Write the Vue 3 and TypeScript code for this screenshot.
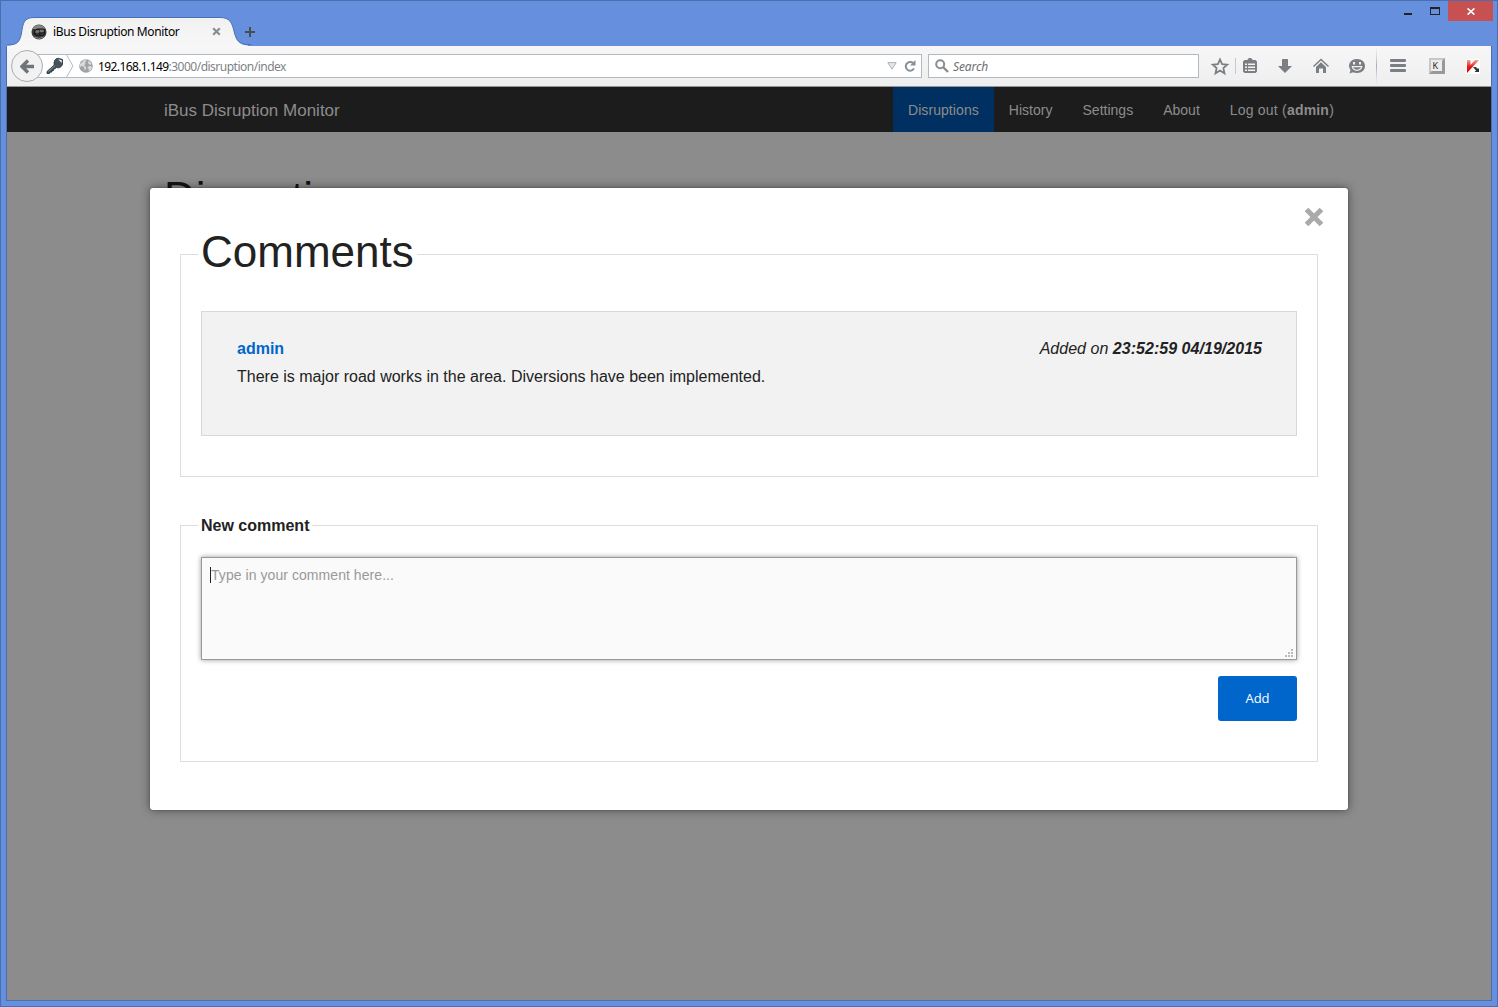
<script setup lang="ts">
interface NavItem {
  label: string
  active?: boolean
  user?: string
}

interface Comment {
  author: string
  added: string
  text: string
}

const appName = 'iBus Disruption Monitor'

const navItems: NavItem[] = [
  { label: 'Disruptions', active: true },
  { label: 'History' },
  { label: 'Settings' },
  { label: 'About' },
  { label: 'Log out', user: 'admin' },
]

const comments: Comment[] = [
  {
    author: 'admin',
    added: '23:52:59 04/19/2015',
    text: 'There is major road works in the area. Diversions have been implemented.',
  },
]
</script>

<template>
  <div class="window">
    <header class="titlebar">
      <div class="tab">
        <svg class="tab-shape" width="244" height="29" viewBox="0 0 244 29">
          <defs>
            <linearGradient id="tabFill" x1="0" y1="0" x2="0" y2="1">
              <stop offset="0" stop-color="#f1f1f2" />
              <stop offset="1" stop-color="#f7f7f8" />
            </linearGradient>
          </defs>
          <path d="M0 28.5C10 28.5 13 25 14.500 16C16 6 17 .5 27 .5H213C223 .5 225 6 227 14C229 23 232 28 241 28.500V29H0Z" fill="url(#tabFill)" />
          <path d="M0 28C10 28 13 25 14.500 16C16 6 17 .5 27 .5H213C223 .5 225 6 227 14C229 23 232 27.500 241 27.500H244" fill="none" stroke="#4a70b4" />
        </svg>
        <svg class="favicon" width="16" height="16" viewBox="0 0 16 16">
          <circle cx="8" cy="8" r="7.500" fill="#3b3b3b" />
          <path d="M1.500 5A7.200 7.200 0 0 1 14.500 5Z" fill="#858585" />
          <path d="M3 6.500 6 4.500h7l1 1v4.500l-2 2H5L2.500 10Z" fill="#1b1b1b" />
          <path d="M5 6.500h3v2H4.500ZM9 6h3.500v2H9ZM5 10h3M9.500 10h3" fill="#777" stroke="#777" stroke-width=".6" />
          <path d="M3 13q5 3 10 0" fill="none" stroke="#888" />
        </svg>
        <span class="tab-title">{{ appName }}</span>
        <svg class="tab-close" width="9" height="9" viewBox="0 0 9 9">
          <path d="M1.200 1.200 7.800 7.800M7.800 1.200 1.200 7.800" stroke="#8a8d91" stroke-width="2.200" />
        </svg>
      </div>
      <svg class="new-tab" width="10" height="10" viewBox="0 0 10 10">
        <path d="M5 0V10M0 5H10" stroke="#4a4c50" stroke-width="2" />
      </svg>
      <div class="controls">
        <svg width="8" height="2"><rect width="8" height="2" fill="#222" /></svg>
        <svg class="maximize" width="10" height="8" viewBox="0 0 10 8">
          <path d="M0 0H10V8H0ZM1 2V7H9V2Z" fill="#222" fill-rule="evenodd" />
        </svg>
        <div class="close">
          <svg width="8" height="7" viewBox="0 0 8 7">
            <path d="M.6.4 7.400 6.600M7.400.4.6 6.600" stroke="#fff" stroke-width="1.600" />
          </svg>
        </div>
      </div>
    </header>

    <div class="toolbar">
      <div class="back">
        <svg width="15" height="15" viewBox="0 0 15 15">
          <path d="M8 1.500 2 7.500 8 13.500M2.500 7.500H14" fill="none" stroke="#6f7479" stroke-width="3.400" />
        </svg>
      </div>
      <div class="urlbar">
        <svg class="key" width="18" height="18" viewBox="0 0 18 18">
          <path d="M1 14.500 8.200 8C7.500 4.500 9 1.500 12 1.200L16.500 2.500V7C16 10 13 11.500 10.500 10.500L8.500 12H7.500V13.500H6V15H4.500L3.500 16.500H1Z" fill="#45535d" stroke="#222d35" stroke-width=".8" />
          <path d="M2.500 14.500 9 8.700" stroke="#84929b" />
          <path d="M12.200 2.300 15.700 6V3.200Z" fill="#fff" />
        </svg>
        <svg class="chevron" width="9" height="24" viewBox="0 0 9 24">
          <path d="M1 0 8 12 1 24" fill="none" stroke="#b5bcc2" />
        </svg>
        <svg class="globe" width="14" height="14" viewBox="0 0 14 14">
          <circle cx="7" cy="7" r="6.800" fill="#a0a2a4" />
          <path d="M5 1 3 3.500 1 5v3l2-1 2 1 .5 3L7 10V8L5 6.500 6.500 5 6 3 8 1.500ZM9 2.500 10.500 2 12.500 4.500 11.500 6 9.500 5ZM9 7.500 12 7 13 8.500 11.500 11.500 9.500 12 10 10 8.500 9Z" fill="#d9dadb" />
        </svg>
        <span class="url"><span class="host">192.168.1.149</span>:3000/disruption/index</span>
        <svg class="dropdown" width="10" height="8" viewBox="0 0 10 8">
          <path d="M.8.6H9.200L5 7.200Z" fill="#e3e7eb" stroke="#acb4bb" />
        </svg>
        <svg class="reload" width="12" height="12" viewBox="0 0 12 12">
          <path d="M10 8.600A4.400 4.400 0 1 1 9 2.900" fill="none" stroke="#84909b" stroke-width="2" />
          <path d="M11.500 0V5.500H6Z" fill="#84909b" />
        </svg>
      </div>
      <div class="search">
        <svg width="14" height="14" viewBox="0 0 14 14">
          <circle cx="5.200" cy="5.200" r="4" fill="none" stroke="#8b8d8f" stroke-width="2" />
          <path d="M8 8 13 13" stroke="#8b8d8f" stroke-width="2.400" />
        </svg>
        <span>Search</span>
      </div>
      <svg class="tools" width="286" height="40" viewBox="1204 46 286 40" fill="#7b7f83">
        <path d="M1220 59.500 1222.100 64.200 1227.200 64.700 1223.400 68.100 1224.500 73.300 1220 70.600 1215.500 73.300 1216.600 68.100 1212.800 64.700 1217.900 64.200Z" fill="none" stroke="#7b7f83" stroke-width="1.800" />
        <path d="M1235.500 58V74" stroke="#c5cad0" />
        <path fill-rule="evenodd" d="M1244.500 60H1247.500V59.500L1249 58H1251L1252.500 59.500V60H1255.500L1257 61.500V71.500L1255.500 73H1244.500L1243 71.500V61.500ZM1245 63.500V65H1247V63.500ZM1248 63.500V65H1255V63.500ZM1245 66.500V68H1247V66.500ZM1248 66.500V68H1255V66.500ZM1245 69.500V71H1247V69.500ZM1248 69.500V71H1255V69.500Z" />
        <path d="M1282.500 59H1287.500L1288 59.500V66H1292L1285 73 1278 66H1282V59.500Z" />
        <path d="M1313.500 66.500 1321 59.500 1328.500 66.500" fill="none" stroke="#7b7f83" stroke-width="1.500" />
        <path d="M1316 67 1321 62.300 1326 67V73H1323V68.500H1319V73H1316Z" />
        <path d="M1357 59C1362 59 1365 62 1365 66S1362 73 1357 73C1355.500 73 1354 72.800 1353 72.200L1349.500 73.500 1350.500 70C1347 65 1350 59 1357 59Z" />
        <path d="M1351.500 66H1362.500C1361.500 72.500 1352.500 72.500 1351.500 66ZM1353 67.300C1354.500 70.500 1359.500 70.500 1361 67.300Z" fill="#f1f1f1" fill-rule="evenodd" />
        <rect x="1353" y="62" width="2" height="2.500" fill="#f1f1f1" /><rect x="1359" y="62" width="2" height="2.500" fill="#f1f1f1" />
        <path d="M1376 48H1377V84H1376Z" fill="url(#divider)" />
        <defs>
          <linearGradient id="divider" gradientUnits="userSpaceOnUse" x1="0" y1="48" x2="0" y2="84">
            <stop offset="0" stop-color="#c4ccd4" stop-opacity=".1" /><stop offset=".5" stop-color="#9fafc0" /><stop offset="1" stop-color="#c4ccd4" stop-opacity=".1" />
          </linearGradient>
          <linearGradient id="red" x1="0" y1="0" x2="0" y2="1">
            <stop offset="0" stop-color="#f5a09b" /><stop offset=".55" stop-color="#e31515" /><stop offset="1" stop-color="#d70909" />
          </linearGradient>
        </defs>
        <rect x="1390" y="59" width="16" height="3" rx="1" /><rect x="1390" y="64" width="16" height="3" rx="1" /><rect x="1390" y="69" width="16" height="3" rx="1" />
        <rect x="1429" y="58" width="16" height="16" fill="#999" />
        <path d="M1429 58H1445L1442 61H1432V71L1429 74Z" fill="#c7c7c7" />
        <rect x="1431" y="60" width="11" height="11" fill="#ececec" />
        <text x="1432.500" y="68.500" font-family="Open Sans, sans-serif" font-size="9" fill="#111">K</text>
        <path d="M1466 59H1480V74H1466Z" fill="#fff" />
        <path d="M1467 60H1470.500V65L1475 60H1479L1473.500 66 1467 73Z" fill="url(#red)" />
        <path d="M1473 67H1476L1477 68.500H1479V72H1474.500L1476 70.500Z" fill="#333" />
      </svg>
    </div>

    <main class="page">
      <nav class="topbar">
        <span class="brand">{{ appName }}</span>
        <ul>
          <li v-for="item in navItems" :key="item.label" :class="{ active: item.active, account: item.user }">
            {{ item.label }}<template v-if="item.user"> (<b>{{ item.user }}</b>)</template>
          </li>
        </ul>
      </nav>
      <h1 class="page-title">Disruptions</h1>

      <section class="modal">
        <svg class="modal-close" width="20" height="20" viewBox="0 0 20 20">
          <path d="M2.500 2.500 17.500 17.500M17.500 2.500 2.500 17.500" stroke="#aaa" stroke-width="5.200" />
        </svg>
        <fieldset class="comments">
          <legend><span>Comments</span></legend>
          <article v-for="comment in comments" :key="comment.added" class="panel">
            <div class="meta">
              <b class="author">{{ comment.author }}</b>
              <i>Added on <b>{{ comment.added }}</b></i>
            </div>
            <p>{{ comment.text }}</p>
          </article>
        </fieldset>
        <fieldset class="new-comment">
          <legend>New comment</legend>
          <div class="textarea">
            <span class="caret"></span><span class="placeholder">Type in your comment here...</span>
            <svg class="grip" width="8" height="8" fill="#bbb">
              <rect x="6" y="0" width="2" height="2" /><rect x="3" y="3" width="2" height="2" /><rect x="6" y="3" width="2" height="2" />
              <rect x="0" y="6" width="2" height="2" /><rect x="3" y="6" width="2" height="2" /><rect x="6" y="6" width="2" height="2" />
            </svg>
          </div>
          <button type="button">Add</button>
        </fieldset>
      </section>
    </main>
  </div>
</template>

<style>
body {
  margin: 0;
  overflow: hidden;
}
</style>

<style scoped>
* {
  box-sizing: border-box;
}
svg {
  display: block;
  flex: none;
}
.window {
  width: 1498px;
  height: 1007px;
  display: flex;
  flex-direction: column;
  border: 1px solid #4a6fb0;
  background: #6690dd;
  font-family: 'Liberation Sans', Arial, sans-serif;
  color: #222;
}
.titlebar {
  height: 45px;
  display: flex;
  padding: 16px 4px 0 6px;
  flex: none;
}
.tab {
  position: relative;
  width: 237px;
  height: 29px;
  display: flex;
  align-items: center;
  padding-left: 24px;
}
.tab-shape {
  position: absolute;
  left: 0;
  top: 0;
}
.favicon {
  position: relative;
}
.tab-title {
  position: relative;
  width: 159px;
  margin-left: 6px;
  font: 12px/16px 'Noto Sans', sans-serif;
  letter-spacing: -0.37px;
  color: #000;
  white-space: nowrap;
}
.tab-close {
  position: relative;
}
.new-tab {
  margin: 10px 0 0 1px;
}
.controls {
  display: flex;
  margin: -16px 0 0 auto;
}
.controls > svg {
  margin: 12px 18px 0 0;
}
.controls > .maximize {
  margin: 6px 8px 0 0;
}
.close {
  width: 45px;
  height: 20px;
  display: flex;
  align-items: center;
  justify-content: center;
  padding-top: 1px;
  background: #c75050;
}
.toolbar {
  height: 41px;
  flex: none;
  margin: 0 5px;
  display: flex;
  align-items: center;
  border: solid #4a6fb0;
  border-width: 0 1px;
  border-bottom: 1px solid #949698;
  background: linear-gradient(#f7f7f8, #eeeeef);
  padding-left: 4px;
}
.back {
  position: relative;
  z-index: 1;
  flex: none;
  width: 32px;
  height: 32px;
  border: 1px solid #aaaeb2;
  border-radius: 50%;
  background: #f2f2f2;
  display: flex;
  align-items: center;
  justify-content: center;
  padding-left: 1px;
}
.urlbar,
.search {
  flex: none;
  height: 24px;
  display: flex;
  align-items: center;
  border: 1px solid #b1bac2;
  background: #fff;
  font: 12px/16px 'Noto Sans', sans-serif;
}
.urlbar {
  width: 886px;
  margin-left: -7px;
  padding-left: 9px;
}
.chevron {
  margin-left: 1px;
}
.globe {
  margin-left: 5px;
}
.url {
  margin-left: 5px;
  padding-top: 2px;
  color: #808285;
  letter-spacing: -0.5px;
}
.host {
  color: #000;
  letter-spacing: -0.6px;
}
.dropdown {
  margin-left: auto;
}
.reload {
  margin: 0 5px 0 7px;
}
.search {
  width: 271px;
  margin-left: 6px;
  padding-left: 6px;
  gap: 4px;
  color: #6e6e6e;
  font-style: italic;
  letter-spacing: -0.1px;
}
.search span {
  padding-top: 2px;
}
.tools {
  margin-left: 5px;
}
.page {
  position: relative;
  margin: 0 5px;
  height: 914px;
  flex: none;
  border: solid #4a6fb0;
  border-width: 0 1px 1px;
  background: #8c8c8c;
}
.topbar {
  height: 45px;
  display: flex;
  justify-content: space-between;
  padding: 0 142px 0 157px;
  background: #1c1c1c;
  color: #8c8c8c;
  line-height: 46px;
}
.brand {
  font-size: 17px;
  line-height: 48px;
}
ul {
  display: flex;
  list-style: none;
  margin: 0;
  padding: 0;
  font-size: 14px;
}
li {
  padding: 0 15px;
  letter-spacing: 0.01px;
}
.account {
  letter-spacing: 0.2px;
}
.active {
  background: #003061;
  letter-spacing: 0.08px;
}
.page-title {
  margin: 35px 0 0 157px;
  font-size: 44px;
  line-height: 62px;
  font-weight: normal;
  color: #131313;
}
.modal {
  position: absolute;
  left: 143px;
  top: 101px;
  width: 1198px;
  height: 622px;
  padding: 35px 30px 0;
  background: #fff;
  border-radius: 3px;
  box-shadow: 0 0 10px rgba(0, 0, 0, 0.5), 0 0 1px #333;
}
.modal-close {
  position: absolute;
  right: 24px;
  top: 19px;
}
fieldset {
  margin: 0;
  padding: 0 20px;
  border: 1px solid #ddd;
}
legend {
  margin-left: -3px;
  padding: 0 3px;
}
.comments {
  height: 254px;
}
.comments legend {
  height: 62px;
  font-size: 44px;
  line-height: 57px;
}
.panel {
  margin-top: 26px;
  height: 125px;
  padding: 23px 34px 0 35px;
  border: 1px solid #d8d8d8;
  background: #f2f2f2;
  font-size: 16px;
  line-height: 28px;
}
.meta {
  display: flex;
  justify-content: space-between;
}
.meta i {
  letter-spacing: 0.03px;
}
.author {
  color: #0066cc;
}
p {
  margin: 0;
}
.new-comment {
  height: 248px;
  margin-top: 37px;
}
.new-comment legend {
  height: 22px;
  font-size: 16px;
  line-height: 24px;
  font-weight: bold;
}
.textarea {
  position: relative;
  height: 103px;
  margin-top: 21px;
  padding: 9px 8px;
  display: flex;
  border: 1px solid #999;
  background: #fafafa;
  box-shadow: 0 0 5px #999;
  font-size: 14px;
  line-height: 17px;
  letter-spacing: 0.06px;
  color: #999;
}
.caret {
  width: 1px;
  height: 16px;
  background: #222;
}
.grip {
  position: absolute;
  right: 3px;
  bottom: 2px;
}
button {
  display: block;
  width: 79px;
  height: 45px;
  margin: 16px 0 0 auto;
  border: 0;
  border-radius: 3px;
  padding: 0 0 2px;
  background: #0066cc;
  color: #fff;
  font: 13px 'Open Sans', sans-serif;
}
</style>
